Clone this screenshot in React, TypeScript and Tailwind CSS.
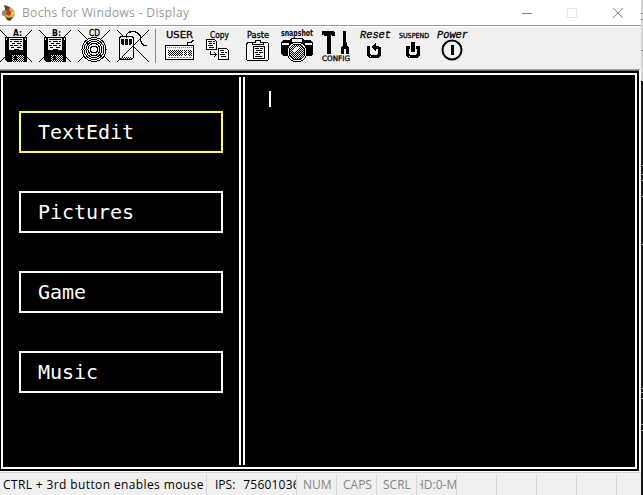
import type { ReactNode } from "react";

function Icon({ label, x = 0, y = 6, w, size = 8, italic, mono, weight = 700, children }: {
  label?: string; x?: number; y?: number; w?: number; size?: number; italic?: boolean; mono?: boolean; weight?: number; children: ReactNode;
}) {
  return (
    <div className="w-[39px] shrink-0">
      <svg width="32" height="32" viewBox="0 0 32 32" className="block overflow-visible" fill="none" stroke="#000" shapeRendering="crispEdges">
        {children}
        {label && (
          <text x={x} y={y} textLength={w} lengthAdjust="spacingAndGlyphs" fontSize={size} fontWeight={weight} fontStyle={italic ? "italic" : "normal"} fontFamily={mono ? "'Liberation Mono', monospace" : "'DejaVu Sans', sans-serif"} fill="#000" stroke="#000" strokeWidth={weight === 400 ? 0.3 : 0}>
            {label}
          </text>
        )}
      </svg>
    </div>
  );
}

const Cross = () => <path d="M0 0L32 32M32 0L0 32" />;

function Floppy({ drive }: { drive: string }) {
  return (
    <Icon label={drive} x={13} y={6} w={9} size={8}>
      <Cross />
      <path d="M5 7h22v25H7l-2-2z" fill="#000" stroke="none" />
      <path d="M9 8h14v12H9zM6 8h1v2H6zM25 8h1v2h-1z" fill="#f0f0f0" stroke="none" />
      <path d="M10 9.5h12M10 11.5h2m2 0h5m1 0h2M12 13.5h3m2 0h4M10 15.5h3m1 0h4m2 0h2M11 17.5h3m3 0h4M14 19.5h5" />
      <path d="M12 25h12v7H12z" fill="url(#dots)" stroke="none" />
      <path d="M14 26h3v4h-3z" fill="#000" stroke="none" />
    </Icon>
  );
}

function Toolbar() {
  return (
    <div className="flex h-[42px] bg-[#f0f0f0] pt-[3px]">
      <svg width="0" height="0" className="absolute">
        <defs>
          <pattern id="dots" width="2" height="2" patternUnits="userSpaceOnUse">
            <rect width="2" height="2" fill="#f0f0f0" />
            <path d="M0 0h1v1H0zM1 1h1v1H1z" fill="#000" stroke="none" shapeRendering="crispEdges" />
          </pattern>
        </defs>
      </svg>
      <Floppy drive="A:" />
      <Floppy drive="B:" />
      <Icon label="CD" x={11} y={6} w={11} size={8} weight={400}>
        <Cross />
        <circle cx="16" cy="19.5" r="12" fill="#f0f0f0" />
        <circle cx="16" cy="19.5" r="10" />
        <circle cx="16" cy="19.5" r="8" />
        <circle cx="16" cy="19.5" r="6" />
        <circle cx="16" cy="19.5" r="3.5" />
        <path d="M8 12l4 4M20 23l4 4" />
      </Icon>
      <Icon>
        <Cross />
        <path d="M3.5 6.500h12l1 2v19l-2 2h-11l-1-2v-19z" fill="#f0f0f0" />
        <path d="M2 30L17 15" />
        <path d="M4 9h3v6H5l-1-2zM8 9h3v6H8zM12 9h3v5l-2 1h-1z" fill="#000" stroke="none" />
        <path d="M4 27h11v2H4z" fill="url(#dots)" stroke="none" />
        <path d="M9.500 8V4.500L11.500 2.500L15 1.500H18L21.500 3.500L23.500 6.500V10.500L25.500 14.500L29.500 16" strokeWidth="1.400" />
      </Icon>
      <div className="-ml-px mr-[8px] -mt-px h-[34px] w-px shrink-0 bg-[#8a8a8a]" />
      <Icon label="USER" x={2} y={8} w={27} size={9.5} weight={400}>
        <path d="M1.500 15.500h28v14h-28z" fill="#f8f8f8" />
        <path d="M3 17.500h25" strokeDasharray="1 1" stroke="#777" />
        <path d="M4 20h15v6H4zM20 20h3v6h-3zM24 20h4v6h-4z" fill="url(#dots)" stroke="none" />
        <path d="M4 27.500h23" strokeDasharray="2 1" stroke="#777" />
        <path d="M23.500 15v-2l2-1h2l2-2" />
      </Icon>
      <Icon label="Copy" x={7} y={8} w={19} size={9.5} weight={400}>
        <path d="M3.500 9.500h8l2 2v8h-10zM15.500 18.500h8l2 2v9h-10z" fill="#f8f8f8" />
        <path d="M5 11.500h4m1 0h2M6 13.500h3m1 0h2M5 15.500h5M6 17.500h5M17 20.500h4M18 22.500h3m1 0h2M17 24.500h5M18 26.500h5" />
        <path d="M7.500 21v3.500h6M11 22l2.500 2.500L11 27" />
      </Icon>
      <Icon label="Paste" x={5} y={8} w={22} size={9.5} weight={400}>
        <path d="M6.500 12.500h19l1 1v16l-1 1h-20l-1-1v-16z" fill="#f8f8f8" />
        <path d="M10.500 14.500v-2h3v-2h5v2h3v2z" fill="#f0f0f0" />
        <path d="M11.500 16.500h11v12h-11z" fill="#f8f8f8" />
        <path d="M13 18.500h4m1 0h3M14 20.500h6M13 22.500h3m1 0h4M14 24.500h4M13 26.500h7" />
      </Icon>
      <Icon label="snapshot" x={0} y={6} w={32} size={8.5} weight={700}>
        <path d="M0 13l2-3h6l2-2h11l2 2h7l2 3v11l-2 2H2l-2-2z" fill="#000" stroke="none" />
        <path d="M11 9h10v3H11zM1 13h7v2H1zM24 13h7v2h-7z" fill="#f0f0f0" stroke="none" />
        <circle cx="16" cy="22" r="10" fill="#f0f0f0" />
        <circle cx="16" cy="22" r="8" fill="url(#dots)" />
        <path d="M12 20l3-3h3l-5 5z" fill="#f0f0f0" stroke="none" />
      </Icon>
      <Icon label="CONFIG" x={2} y={31} w={28} size={7.5} weight={400}>
        <path d="M2 1h11l2 2v3h-3l-1-1v19H7V6H5L3 5H2zM23 1h3v11h1v3l2 3v6h-3v-5h-2v5h-3v-6l2-3v-3z" fill="#000" stroke="none" />
      </Icon>
      <Icon label="Reset" x={1} y={8} w={31} size={10} italic mono weight={400}>
        <path d="M11 17.500H9.500v7l2 2h7l2-2v-6l-2-1h-3" strokeWidth="3" />
        <path d="M17 12v9l-5-4z" fill="#000" stroke="none" />
      </Icon>
      <Icon label="SUSPEND" x={1} y={8} w={30} size={7} weight={400}>
        <path d="M12 17.500H9.500v7l2 2h7l2-2v-7H18" strokeWidth="3" />
        <path d="M13 12h4v10h-4z" fill="#000" stroke="none" />
      </Icon>
      <Icon label="Power" x={0} y={8} w={31} size={10} italic mono weight={400}>
        <circle cx="15" cy="20" r="9.500" strokeWidth="2" shapeRendering="auto" />
        <path d="M14 15h3v10h-3z" fill="#000" stroke="none" />
      </Icon>
    </div>
  );
}

function TitleBar() {
  return (
    <div className="flex h-[25px] items-center bg-white">
      <svg width="20" height="20" viewBox="0 0 20 20" className="shrink-0">
        <path d="M4 2l4 1 3 2 2 4-4 3-5-2 1-4z" fill="#4c5140" />
        <path d="M2 8l4-1 2 4-2 3-4-2z" fill="#8c8a80" />
        <path d="M10 4l4 3 1 5-3 4-4 1-3-4 3-3z" fill="#d8ad35" />
        <path d="M7 7l4 1v3l-2 2-3-2z" fill="#c43b22" />
        <path d="M11 9h3v3h-3z" fill="#efd94d" />
        <path d="M5 13l3 2 5-1-3 4-3-1z" fill="#4d4124" />
      </svg>
      <div className="ml-[2px] w-[480px] whitespace-nowrap text-[12px] leading-[24px] tracking-[0.35px] text-[#999]">Bochs for Windows - Display</div>
      <svg width="106" height="12" viewBox="0 0 106 12" className="ml-[20px] shrink-0" fill="none" stroke="#858585">
        <path d="M0 6.500h10" />
        <path d="M45.500 1.500h9v9h-9z" stroke="#e5e5e5" />
        <path d="M91 1l10 10M101 1L91 11" />
      </svg>
    </div>
  );
}

function MenuItem({ children, active }: { children: string; active?: boolean }) {
  return (
    <div className={`h-[42px] w-[204px] border-2 pl-[17px] font-['DejaVu_Sans_Mono',monospace] text-[20px] leading-[39px] tracking-[-0.04px] text-white ${active ? "border-[#ffff55]" : "border-white"}`}>{children}</div>
  );
}

function Screen() {
  return (
    <div className="h-[400px] bg-black py-[2px] pl-px pr-[2px]">
      <div className="flex h-full border-2 border-white">
        <div className="flex w-[236px] flex-col gap-[38px] pl-[16px] pt-[36px]">
          <MenuItem active>TextEdit</MenuItem>
          <MenuItem>Pictures</MenuItem>
          <MenuItem>Game</MenuItem>
          <MenuItem>Music</MenuItem>
        </div>
        <div className="my-[2px] w-[6px] border-x-2 border-white" />
        <div className="pl-[24px] pt-[16px]">
          <div className="h-[16px] w-[2px] bg-white" />
        </div>
      </div>
    </div>
  );
}

function StatusBar() {
  const cell = "h-[20px] shrink-0 overflow-hidden whitespace-nowrap border-r border-[#d5d5d5]";
  const key = `${cell} w-[40px] pl-[6px] text-[#858585]`;
  return (
    <div className="flex h-[22px] bg-[#f0f0f0] pt-[2px] text-[12px] leading-[19px]">
      <div className={`${cell} w-[207px] pl-[3px] tracking-[0.38px]`}>CTRL + 3rd button enables mouse</div>
      <div className={`${cell} w-[90px] whitespace-pre pl-[8px]`}>IPS:<span className="ml-[8px] tracking-[0.2px]">75601036</span></div>
      <div className={key}>NUM</div>
      <div className={key}>CAPS</div>
      <div className={key}>SCRL</div>
      <div className={`${cell} w-[40px] pl-[3px] text-[#858585]`}>
        <div className="overflow-hidden"><div className="-ml-[5px]">HD:0-M</div></div>
      </div>
      <div className={key} />
      <div className={key} />
      <div className={key} />
      <div className={key} />
    </div>
  );
}

const marks = [84, 93, 99, 115, 163, 307, 311, 317, 343, 349];

function Backdrop(): ReactNode {
  return (
    <div className="w-[2px] shrink-0 bg-[#161616]">
      <svg width="2" height="495" className="block" shapeRendering="crispEdges">
        <path d="M0 0h2v81H0z" fill="#d5d5d5" />
        <path d="M0 13h2v1H0zM0 19h2v1H0zM0 50h2v1H0z" fill="#888" />
        {marks.map((y) => <rect key={y} x="0" y={y + 81} width="2" height="1" fill="#999" />)}
      </svg>
    </div>
  );
}

export default function App() {
  return (
    <div className="flex h-[495px] w-[643px] overflow-hidden bg-white font-['Open_Sans','Noto_Sans',sans-serif] text-black">
      <div className="w-[641px] shrink-0">
        <TitleBar />
        <div className="h-px bg-[#999]" />
        <div className="h-px bg-white" />
        <Toolbar />
        <div className="mr-[1px] h-px bg-[#a0a0a0]" />
        <div className="mr-[2px] h-px bg-[#696969]" />
        <div className="mr-[2px]"><Screen /></div>
        <div className="h-px bg-white" />
        <div className="h-px bg-[#d5d5d5]" />
        <StatusBar />
      </div>
      <Backdrop />
    </div>
  );
}
